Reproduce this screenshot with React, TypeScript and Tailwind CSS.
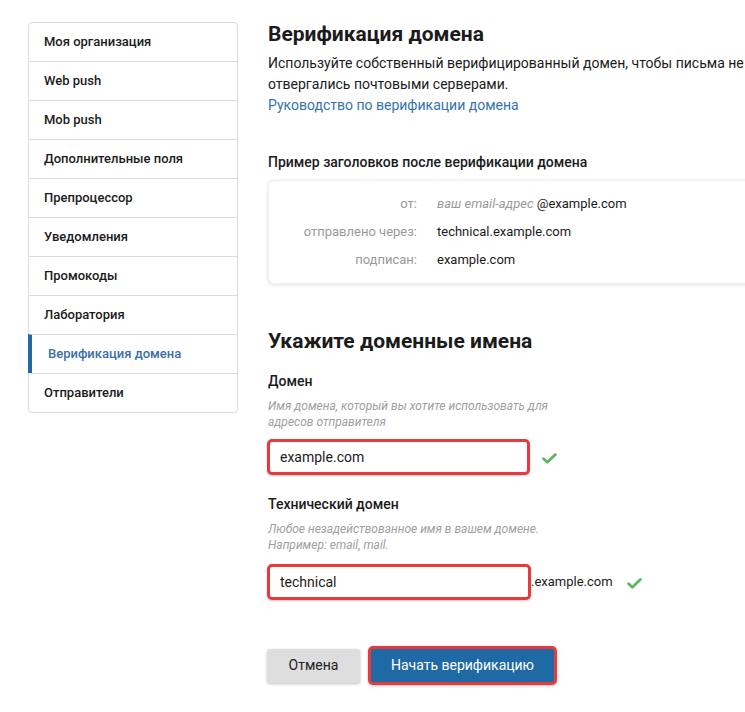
import React from "react";

const items = [
  "Моя организация",
  "Web push",
  "Mob push",
  "Дополнительные поля",
  "Препроцессор",
  "Уведомления",
  "Промокоды",
  "Лаборатория",
  "Верификация домена",
  "Отправители",
];

function Check() {
  return (
    <svg width="15" height="11" viewBox="0 0 15 11" className="shrink-0">
      <path d="M1.6 5.8 L5.3 9.2 L13.4 1.6" fill="none" stroke="#5cb85c" strokeWidth="2.8" strokeLinecap="round" strokeLinejoin="round" />
    </svg>
  );
}

export default function App() {
  return (
    <div className="w-[745px] h-[712px] overflow-hidden bg-white text-[#1b1b1b]" style={{ fontFamily: "Roboto, 'Noto Sans', sans-serif" }}>
      <div className="flex items-start pt-[22px] pl-[28px] gap-[30px]">
        <div className="w-[210px] shrink-0 border border-[#dcdcdc] rounded-[4px] bg-white">
          {items.map((it, i) => {
            const active = it === "Верификация домена";
            return (
              <div
                key={it}
                className={
                  (i > 0 ? "border-t border-[#dcdcdc] " : "") +
                  (active
                    ? "-ml-px border-l-4 border-l-[#2068a8] pl-[16px] text-[#3b6fa6] h-[39px]"
                    : "pl-[15px] text-[#1b1b1b] " + (i > 0 ? "h-[39px]" : "h-[38px]")) +
                  " flex items-center text-[13px] font-medium"
                }
              >
                {it}
              </div>
            );
          })}
        </div>

        <div className="w-[500px] shrink-0 flex flex-col">
          <h1 className="text-[21px] leading-[24px] font-bold">Верификация домена</h1>
          <p className="mt-[7px] text-[14px] leading-[21px] w-[480px]">
            Используйте собственный верифицированный домен, чтобы письма не отвергались почтовыми серверами.
          </p>
          <a className="text-[14px] leading-[21px] text-[#3573ae]">Руководство по верификации домена</a>

          <h3 className="mt-[36px] text-[14px] leading-[20px] font-medium">Пример заголовков после верификации домена</h3>
          <div className="mt-[8px] w-[520px] rounded-[6px] border border-[#efefef] shadow-[0_1px_4px_rgba(0,0,0,0.12)] pt-[9px] pb-[9px] bg-white">
            <div className="grid grid-cols-[148px_1fr] gap-x-[20px] text-[13px] leading-[28px]">
              <div className="text-right text-[#9a9a9a]">от:</div>
              <div>
                <span className="italic text-[#9a9a9a]">ваш email-адрес</span> @example.com
              </div>
              <div className="text-right text-[#9a9a9a]">отправлено через:</div>
              <div>technical.example.com</div>
              <div className="text-right text-[#9a9a9a]">подписан:</div>
              <div>example.com</div>
            </div>
          </div>

          <h2 className="mt-[43px] text-[21px] leading-[28px] font-bold">Укажите доменные имена</h2>

          <label className="mt-[16px] text-[14px] leading-[20px] font-medium">Домен</label>
          <p className="mt-[7px] text-[12px] leading-[16px] italic text-[#a0a0a0] w-[290px]">
            Имя домена, который вы хотите использовать для адресов отправителя
          </p>
          <div className="mt-[9px] flex items-center -ml-px">
            <div className="w-[263px] h-[36px] border-[3px] border-[#e8393d] rounded-[5px] flex items-center pl-[10px] text-[14px] bg-white shadow-[0_1px_2px_rgba(0,0,0,0.2)]">
              example.com
            </div>
            <div className="ml-[12px] mt-[2px]">
              <Check />
            </div>
          </div>

          <label className="mt-[19px] text-[14px] leading-[20px] font-medium">Технический домен</label>
          <p className="mt-[7px] text-[12px] leading-[16px] italic text-[#a0a0a0] w-[300px]">
            Любое незадействованное имя в вашем домене. Например: email, mail.
          </p>
          <div className="mt-[11px] flex items-center -ml-px">
            <div className="w-[264px] h-[36px] border-[3px] border-[#e8393d] rounded-[5px] flex items-center pl-[10px] text-[14px] bg-white shadow-[0_1px_2px_rgba(0,0,0,0.2)]">
              technical
            </div>
            <span className="text-[13px]">.example.com</span>
            <div className="ml-[14px] mt-[2px]">
              <Check />
            </div>
          </div>

          <div className="mt-[46px] flex items-center gap-[8px] -ml-px">
            <button className="w-[93px] h-[34px] rounded-[3px] bg-[#dedede] text-[14px] text-[#222] shadow-[0_1px_3px_rgba(0,0,0,0.25)]">
              Отмена
            </button>
            <button className="w-[189px] h-[39px] rounded-[5px] border-[3px] border-[#e8393d] bg-[#1f69a4] text-[14px] text-white shadow-[0_1px_3px_rgba(0,0,0,0.25)]">
              Начать верификацию
            </button>
          </div>
        </div>
      </div>
    </div>
  );
}
